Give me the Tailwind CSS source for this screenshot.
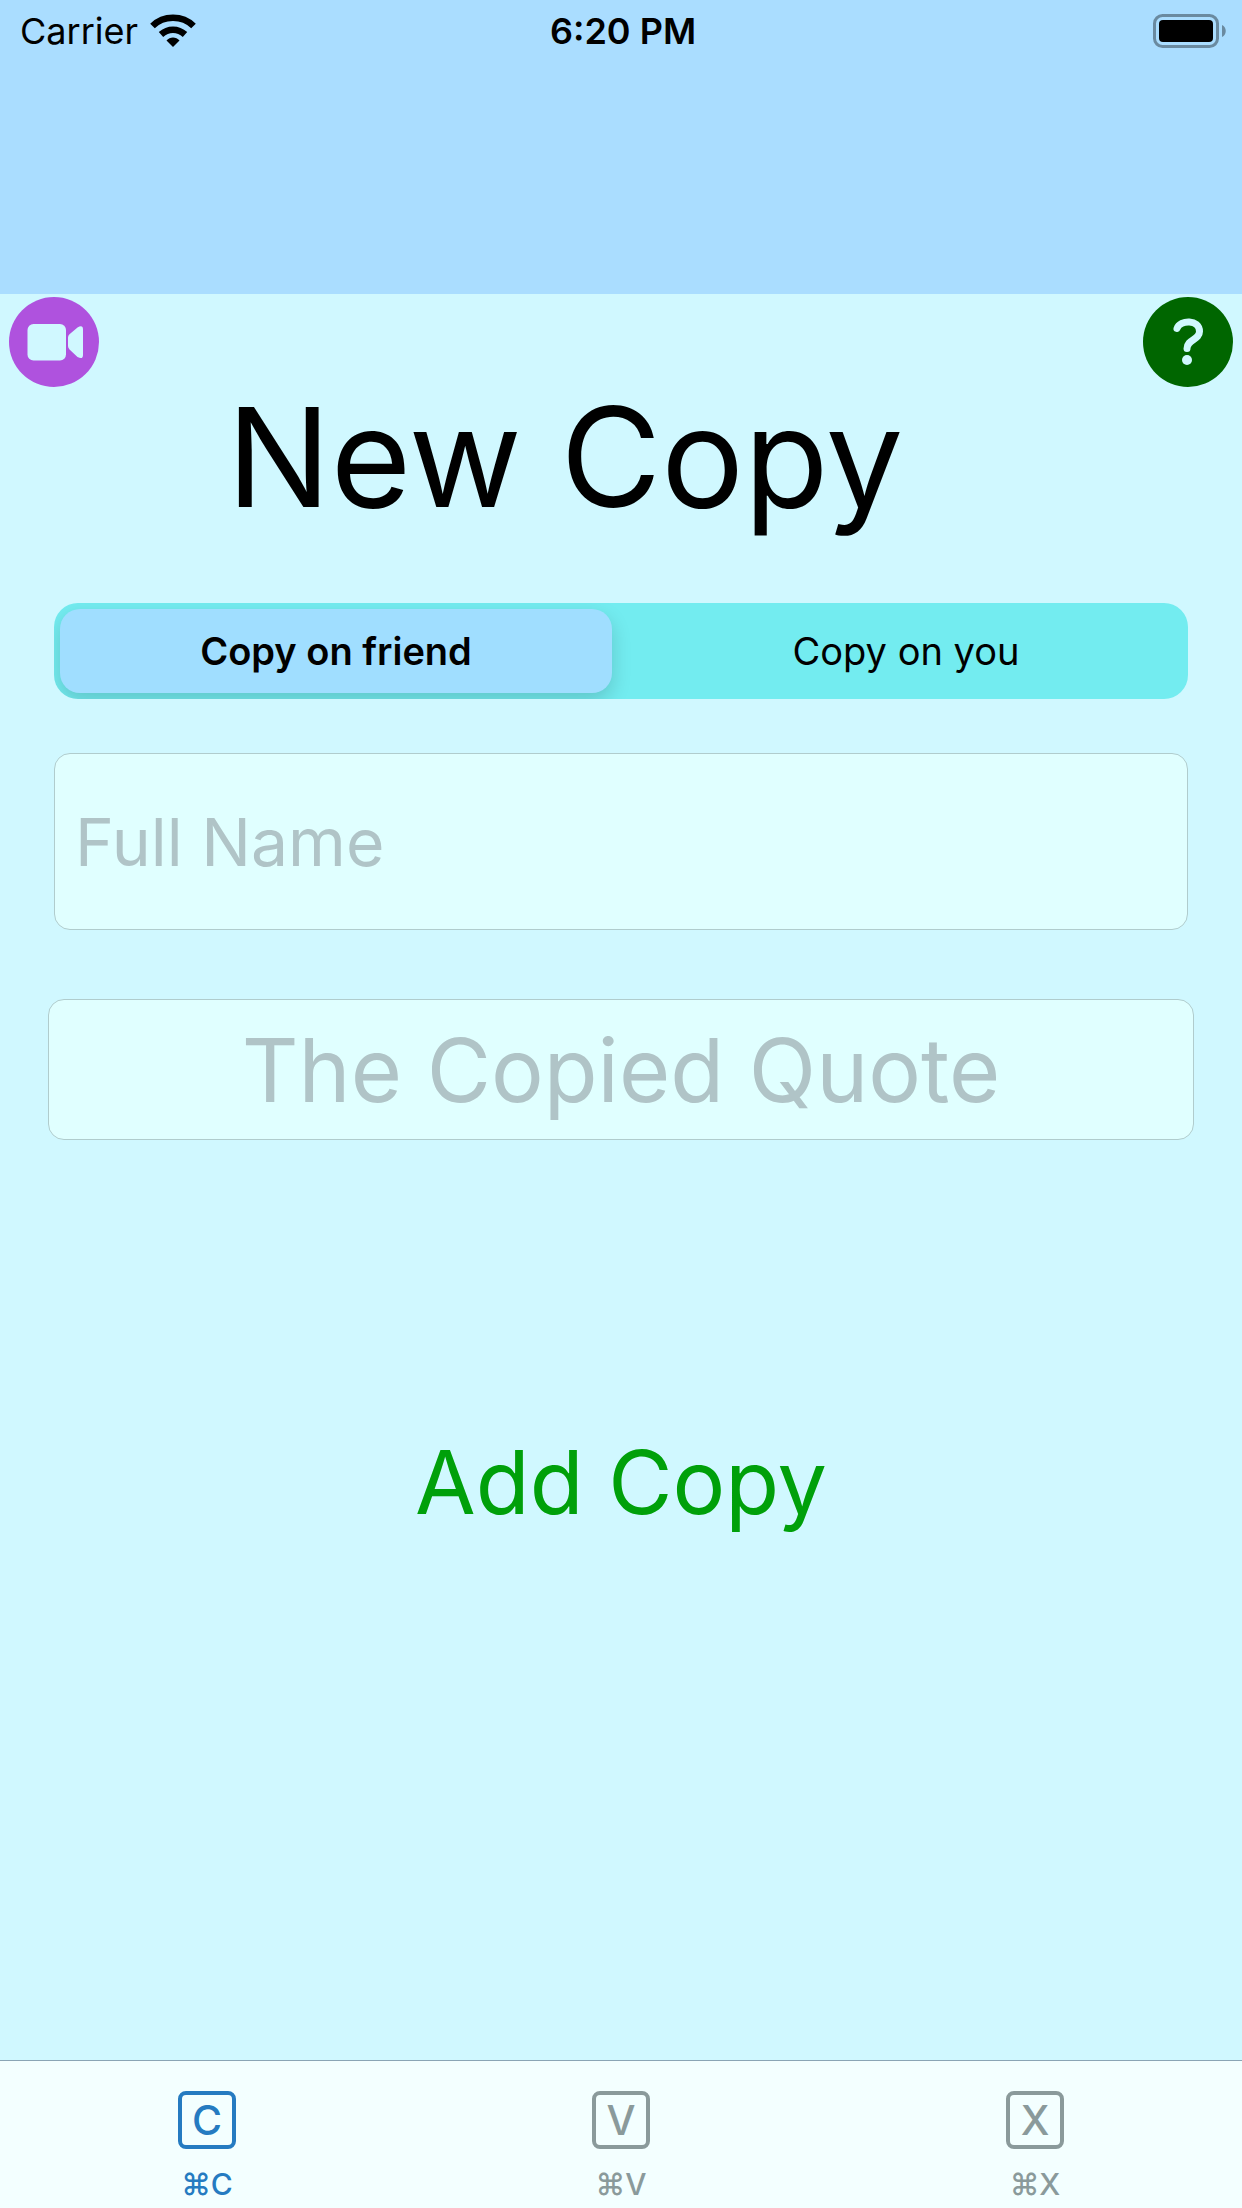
<!DOCTYPE html>
<html lang="en">
<head>
<meta charset="utf-8">
<meta name="viewport" content="width=device-width, initial-scale=1">
<title>New Copy</title>
<script src="https://cdn.jsdelivr.net/npm/@tailwindcss/browser@4"></script>
</head>
<body class="flex min-h-screen flex-col bg-[#d0f8ff] font-['Inter',sans-serif] text-black">
  <header class="h-[294px] bg-[#aaddff]">
    <div class="grid h-[62px] grid-cols-3 items-center pr-4 pl-5">
      <div class="flex items-center gap-3">
        <span class="text-[36px] leading-[42px]">Carrier</span>
        <svg class="h-[34px] w-[46px]" viewBox="0 0 46 34" aria-label="Wi-Fi">
          <g fill="none" stroke="#000" stroke-width="6.500">
            <path d="M2.500 12C13.500 1 32.500 1 43.500 12"/>
            <path d="M11 20.500C18 14 28 14 35 20.500"/>
          </g>
          <path d="M23 33l-6.500-6.500c3.500-4 9.500-4 13 0z"/>
        </svg>
      </div>
      <time class="text-center text-[36px] leading-[42px] font-semibold">6:20 PM</time>
      <svg class="h-[34px] w-[73px] justify-self-end" viewBox="0 0 73 34" aria-label="Battery full">
        <rect x="1.500" y="1.500" width="63" height="31" rx="8" fill="none" stroke="#6a8aa0" stroke-width="3"/>
        <rect x="6" y="6" width="54" height="22" rx="4"/>
        <path d="M69 11c5 2 5 10 0 12z" fill="#6a8aa0"/>
      </svg>
    </div>
  </header>

  <main class="flex flex-1 flex-col">
    <div class="flex items-start justify-between px-[9px] pt-[3px]">
      <button class="size-[90px]" aria-label="Record video">
        <svg class="size-full" viewBox="0 0 90 90">
          <circle cx="45" cy="45" r="45" fill="#af52de"/>
          <rect x="18.500" y="27" width="38.500" height="36.500" rx="6" fill="#d0f8ff"/>
          <path d="M59 40.500q0-2 1.500-3.300l8-6.800q5.500-3 5.500 2v25.500q0 5-5.500 2l-8-7.500q-1.500-1.300-1.500-3.300z" fill="#d0f8ff"/>
        </svg>
      </button>
      <h1 class="flex-1 pt-[72px] pr-28 text-center text-[138px] leading-[176px]">New Copy</h1>
      <button class="size-[90px]" aria-label="Help">
        <svg class="size-full" viewBox="0 0 90 90">
          <circle cx="45" cy="45" r="45" fill="#006600"/>
          <path d="M34 31.500C37 22.500 56.500 22 56.500 34.500C56.500 43 44 42.500 44 51.500" fill="none" stroke="#d0f8ff" stroke-width="7" stroke-linecap="round"/>
          <circle cx="44" cy="63" r="5" fill="#d0f8ff"/>
        </svg>
      </button>
    </div>

    <form class="flex flex-col px-12">
      <fieldset class="mx-1.5 mt-[58px] grid h-24 grid-cols-2 gap-[18px] overflow-hidden rounded-3xl bg-[#73ecf0] p-1.5 text-[38px]">
        <label class="flex cursor-pointer items-center justify-center rounded-[20px] has-checked:bg-[#a0deff] has-checked:font-semibold has-checked:shadow-[0_8px_20px_rgba(0,0,0,0.16)]">
          <input class="sr-only" type="radio" name="target" checked>Copy on friend
        </label>
        <label class="flex cursor-pointer items-center justify-center rounded-[20px] has-checked:bg-[#a0deff] has-checked:font-semibold has-checked:shadow-[0_8px_20px_rgba(0,0,0,0.16)]">
          <input class="sr-only" type="radio" name="target">Copy on you
        </label>
      </fieldset>
      <input class="mx-1.5 mt-[54px] h-[177px] rounded-2xl border border-[#b0cccd] bg-[#e0ffff] px-5 text-[66px] placeholder:text-[#b0c4c7]" type="text" aria-label="Full Name" placeholder="Full Name">
      <input class="mt-[69px] h-[141px] rounded-2xl border border-[#b0cccd] bg-[#e0ffff] px-5 text-center text-[88px] placeholder:text-[#b0c4c7]" type="text" aria-label="The Copied Quote" placeholder="The Copied Quote">
      <button class="mt-[286px] self-center text-[88px] leading-[112px] text-[#00a00a]" type="button">Add Copy</button>
    </form>
  </main>

  <nav class="grid h-[148px] grid-cols-3 border-t border-[#8aa5b5] bg-[#f3ffff] pt-[30px] text-[#8a9a9b]">
    <a class="flex flex-col items-center gap-[15px] text-[#257bc1]" href="#copy">
      <span class="flex size-[58px] items-center justify-center rounded-lg border-4 border-current text-[41px] leading-none font-medium">C</span>
      <span class="text-[30px] leading-[40px] font-medium">⌘C</span>
    </a>
    <a class="flex flex-col items-center gap-[15px]" href="#paste">
      <span class="flex size-[58px] items-center justify-center rounded-lg border-4 border-current text-[41px] leading-none font-medium">V</span>
      <span class="text-[30px] leading-[40px] font-medium">⌘V</span>
    </a>
    <a class="flex flex-col items-center gap-[15px]" href="#cut">
      <span class="flex size-[58px] items-center justify-center rounded-lg border-4 border-current text-[41px] leading-none font-medium">X</span>
      <span class="text-[30px] leading-[40px] font-medium">⌘X</span>
    </a>
  </nav>
</body>
</html>
